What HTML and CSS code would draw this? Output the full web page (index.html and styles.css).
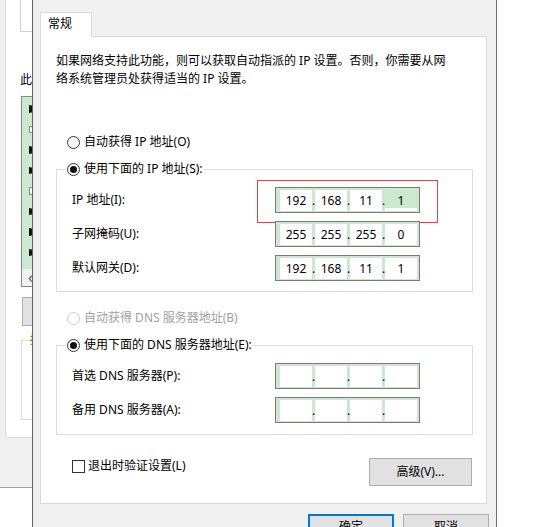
FILE: index.html
```html
<!DOCTYPE html>
<html lang="zh-CN">
<head>
<meta charset="utf-8">
<title>IPv4 属性</title>
<link rel="stylesheet" href="styles.css">
</head>
<body>
<div class="desk">
  <div class="bgwin">
    <div class="bgframe">
      <div class="bgpanel">
        <div class="bgtopbox"></div>
        <div class="bgtext">此</div>
        <div class="bglist">
          <div class="bgitem on"></div>
          <div class="bgitem"></div>
          <div class="bgitem on"></div>
          <div class="bgitem on"></div>
          <div class="bgitem"></div>
          <div class="bgitem on"></div>
          <div class="bgitem on"></div>
          <div class="bgitem on"></div>
          <div class="bgscroll">&#8249;</div>
        </div>
        <div class="bgbtn"></div>
        <div class="bggroup"><span class="bgglyph">描</span></div>
      </div>
    </div>
  </div>

  <div class="dialog">
    <div class="tabs"><div class="tab">常规</div></div>
    <div class="panel">
      <p class="desc">如果网络支持此功能，则可以获取自动指派的 IP 设置。否则，你需要从网<br>络系统管理员处获得适当的 IP 设置。</p>

      <div class="radio-row"><span class="radio"></span>自动获得 IP 地址(O)</div>

      <fieldset class="group g1">
        <legend class="legend"><span class="radio checked"></span>使用下面的 IP 地址(S):</legend>
        <div class="field-row first">
          <span class="label">IP 地址(I):</span>
          <div class="ipbox">
            <span class="seg">192</span><span class="dot">.</span><span class="seg">168</span><span class="dot">.</span><span class="seg">11</span><span class="dot">.</span><span class="seg sel">1</span>
          </div>
          <div class="mark"></div>
        </div>
        <div class="field-row">
          <span class="label">子网掩码(U):</span>
          <div class="ipbox">
            <span class="seg">255</span><span class="dot">.</span><span class="seg">255</span><span class="dot">.</span><span class="seg">255</span><span class="dot">.</span><span class="seg">0</span>
          </div>
        </div>
        <div class="field-row">
          <span class="label">默认网关(D):</span>
          <div class="ipbox">
            <span class="seg">192</span><span class="dot">.</span><span class="seg">168</span><span class="dot">.</span><span class="seg">11</span><span class="dot">.</span><span class="seg">1</span>
          </div>
        </div>
      </fieldset>

      <div class="radio-row disabled"><span class="radio"></span>自动获得 DNS 服务器地址(B)</div>

      <fieldset class="group g2">
        <legend class="legend"><span class="radio checked"></span>使用下面的 DNS 服务器地址(E):</legend>
        <div class="field-row first">
          <span class="label">首选 DNS 服务器(P):</span>
          <div class="ipbox">
            <span class="seg"></span><span class="dot">.</span><span class="seg"></span><span class="dot">.</span><span class="seg"></span><span class="dot">.</span><span class="seg"></span>
          </div>
        </div>
        <div class="field-row">
          <span class="label">备用 DNS 服务器(A):</span>
          <div class="ipbox">
            <span class="seg"></span><span class="dot">.</span><span class="seg"></span><span class="dot">.</span><span class="seg"></span><span class="dot">.</span><span class="seg"></span>
          </div>
        </div>
      </fieldset>

      <div class="footer-row">
        <label class="check"><span class="checkbox"></span>退出时验证设置(L)</label>
        <button class="btn adv">高级(V)...</button>
      </div>
    </div>
    <div class="actions">
      <button class="btn primary">确定</button>
      <button class="btn">取消</button>
    </div>
  </div>

  <div class="rest"></div>
</div>
</body>
</html>
```

FILE: styles.css
```css
html, body {
  margin: 0;
  padding: 0;
  height: 527px;
  overflow: hidden;
  background: #fff;
}
body {
  font-family: "Noto Sans", "Noto Sans CJK SC", sans-serif;
  font-size: 12px;
  color: #000;
}
.desk {
  display: flex;
  height: 527px;
}

/* background window on the left */
.bgwin {
  width: 32px;
  flex: none;
  overflow: hidden;
  background: #fff;
}
.bgframe {
  width: 60px;
  height: 487px;
  background: #f0f0f0;
  border-bottom: 1px solid #a0a0a0;
}
.bgpanel {
  margin-left: 5px;
  height: 437px;
  background: #fff;
  border-left: 1px solid #dadada;
  border-bottom: 1px solid #dadada;
  display: flex;
  flex-direction: column;
}
.bgtopbox {
  margin-left: 14px;
  height: 31px;
  border-left: 1px solid #d0d0d0;
  border-bottom: 1px solid #d0d0d0;
  flex: none;
}
.bgtext {
  margin: 39px 0 0 14px;
  line-height: 18px;
  height: 18px;
}
.bglist {
  margin: 7px 0 0 15px;
  height: 181px;
  border: 1px solid #828790;
  background: #cce8cf;
  display: flex;
  flex-direction: column;
  padding-top: 8px;
  box-sizing: content-box;
}
.bgitem {
  margin-left: 7px;
  width: 10px;
  height: 8px;
  background: #fff;
  border: 1px solid #888;
  box-sizing: border-box;
  margin-bottom: 12.8px;
}
.bgitem.on {
  border-left: 3px solid #111;
}
.bgscroll {
  margin-top: auto;
  height: 17px;
  background: #f0f0f0;
  color: #606060;
  font-size: 16px;
  line-height: 17px;
  padding-left: 6px;
}
.bgbtn {
  margin: 10px 0 0 16px;
  height: 29px;
  box-sizing: border-box;
  background: #e1e1e1;
  border: 1px solid #adadad;
}
.bggroup {
  margin: 14px 0 0 15px;
  height: 80px;
  box-sizing: border-box;
  border: 1px solid #dcdcdc;
  border-right: none;
}
.bgglyph {
  display: block;
  margin: -8px 0 0 8px;
  width: 14px;
  background: #fff;
  line-height: 14px;
  font-size: 12px;
  color: #7a5a20;
}

/* dialog */
.dialog {
  width: 447px;
  flex: none;
  background: #f0f0f0;
  border-left: 1px solid #646464;
  border-right: 1px solid #6e6e6e;
  padding: 12px 9px 0 7px;
  box-sizing: content-box;
  display: flex;
  flex-direction: column;
}
.dialog > * { flex: none; }
.tabs {
  display: flex;
  height: 24px;
}
.tab {
  position: relative;
  z-index: 1;
  width: 52px;
  height: 25px;
  box-sizing: border-box;
  background: #fff;
  border: 1px solid #d9d9d9;
  border-bottom: none;
  padding-left: 7px;
  line-height: 22px;
}
.panel {
  background: #fff;
  border: 1px solid #d9d9d9;
  padding: 0 13px 17px 0;
  display: flex;
  flex-direction: column;
}
.desc {
  margin: 15px 0 0 15px;
  line-height: 18px;
  white-space: nowrap;
}
.radio-row {
  margin: 45px 0 0 26px;
  height: 18px;
  line-height: 18px;
  display: flex;
  align-items: center;
}
.radio-row.disabled {
  margin-top: 17px;
  color: #a0a0a0;
}
.radio-row.disabled .radio {
  border-color: #cccccc;
}
.radio {
  width: 13px;
  height: 13px;
  box-sizing: border-box;
  border: 1px solid #333;
  border-radius: 50%;
  background: #fff;
  display: inline-flex;
  align-items: center;
  justify-content: center;
  margin-right: 4px;
  flex: none;
}
.radio.checked::after {
  content: "";
  width: 7px;
  height: 7px;
  border-radius: 50%;
  background: #111;
}

.group {
  margin: 9px 0 0 15px;
  padding: 0 0 10px 0;
  border: 1px solid #dcdcdc;
  min-width: 0;
}
.g2 {
  padding-bottom: 11px;
}
.legend {
  margin-left: 9px;
  padding: 0 1px;
  height: 18px;
  line-height: 18px;
  display: flex;
  align-items: center;
  background: #fff;
}
.field-row {
  position: relative;
  display: flex;
  align-items: center;
  height: 26px;
  margin-top: 8px;
  padding-left: 15px;
}
.field-row.first {
  margin-top: 9px;
}
.label {
  width: 203px;
  flex: none;
  line-height: 18px;
}
.ipbox {
  width: 145px;
  height: 26px;
  box-sizing: border-box;
  border: 1px solid #7a7a7a;
  background: #cce8cf;
  padding: 2px 2px 1px 4px;
  display: flex;
}
.seg {
  width: 32px;
  height: 21px;
  flex: none;
  background: #fff;
  text-align: center;
  line-height: 21px;
}
.seg.sel {
  background: #cce8cf;
  box-shadow: inset 0 -3px 0 #fff;
}
.dot {
  width: 3px;
  flex: none;
  display: flex;
  justify-content: center;
  line-height: 21px;
  overflow: visible;
}
.mark {
  position: absolute;
  left: 200px;
  top: -7px;
  width: 181px;
  height: 43px;
  box-sizing: border-box;
  border: 1px solid #ec3b3b;
  pointer-events: none;
}

.footer-row {
  margin: 23px 1px 0 31px;
  display: flex;
  justify-content: space-between;
  align-items: flex-start;
}
.check {
  margin-top: -1px;
  display: flex;
  align-items: center;
  height: 18px;
  line-height: 18px;
}
.checkbox {
  width: 13px;
  height: 13px;
  box-sizing: border-box;
  border: 1px solid #333;
  background: #fff;
  margin-right: 3px;
}
.btn {
  font: inherit;
  color: #000;
  background: #e1e1e1;
  border: 1px solid #adadad;
  padding: 0;
  margin: 0;
  box-sizing: border-box;
  text-align: center;
  line-height: 18px;
}
.adv {
  width: 103px;
  height: 28px;
}
.actions {
  margin: 10px -2px 0 0;
  display: flex;
  justify-content: flex-end;
  gap: 9px;
}
.actions .btn {
  width: 86px;
  height: 26px;
}
.btn.primary {
  border: 2px solid #0078d7;
}
.rest {
  flex: 1;
  background: #fff;
}
```
